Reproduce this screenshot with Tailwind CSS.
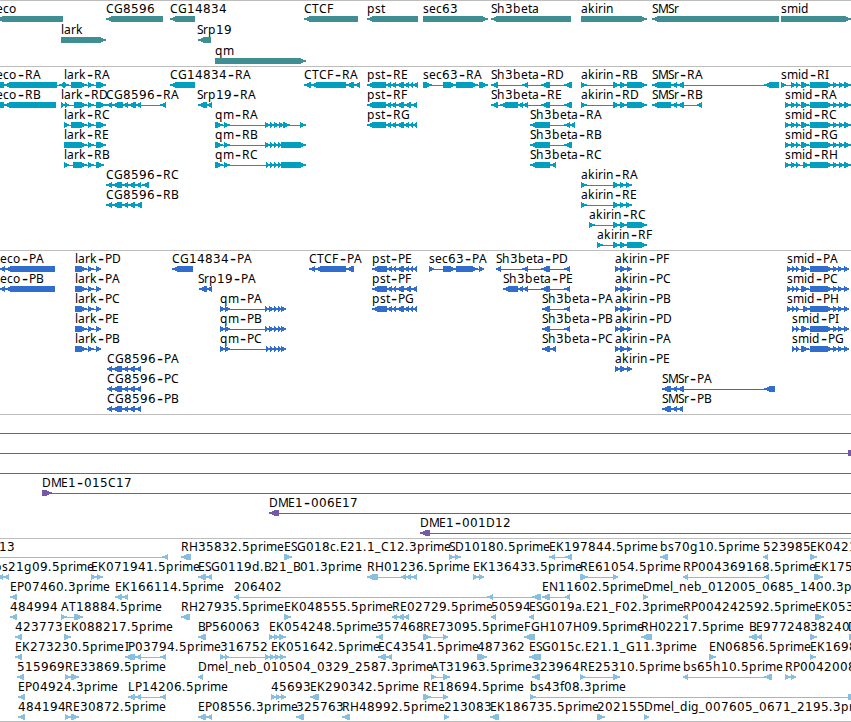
<!DOCTYPE html>
<html lang="en">
<head>
  <meta charset="UTF-8" />
  <meta name="viewport" content="width=device-width, initial-scale=1.0" />
  <title>Genome Tracks</title>
  <script src="https://cdn.jsdelivr.net/npm/@tailwindcss/browser@4"></script>
</head>
<body class="bg-white overflow-hidden">
  <main class="w-[851px] h-[722px] flex flex-col overflow-hidden font-['Noto_Sans',sans-serif] text-[12px]">
    <section id="genes" class="border-t border-[#bdbdbd] pb-[2px] fill-[#3f8e93]"></section>
    <section id="transcripts" class="border-t border-[#bdbdbd] pb-[3px] fill-[#009fc0]"></section>
    <section id="proteins" class="border-t border-[#bdbdbd] pb-[3px] fill-[#306dcc]"></section>
    <section id="clones" class="border-t border-[#bdbdbd] pb-[3px] fill-[#7559a6]"></section>
    <section id="ests" class="border-y border-[#bdbdbd] pb-[2px] fill-[#88bfdf]"></section>
  </main>

  <script>
    // Each feature: "label | label x | strand | start-end blocks"
    const tracks = {
      genes: [
        ['eco|-4|L|-3:63', 'CG8596|106|L|106:163', 'CG14834|170|L|170:195', 'CTCF|304|L|304:358', 'pst|367|L|367:418', 'sec63|423|R|423:488', 'Sh3beta|491|L|491:571', 'akirin|581|R|581:647', 'SMSr|652|L|652:779', 'smid|781|R|781:851'],
        ['lark|61|R|61:106', 'Srp19|197|L|198:211'],
        ['qm|215|R|215:306'],
      ],
      transcripts: [
        ['eco-RA|-4|L|-6:4 4:57 59:65', 'lark-RA|64|R|63:69 71:87 88:94 96:106', 'CG14834-RA|170|L|170:195', 'CTCF-RA|304|L|304:311 311:346 346:354 354:360', 'pst-RE|367|L|367:386 386:391 391:396 396:404 404:409 409:413 413:418', 'sec63-RA|423|R|423:432 443:456 456:478 479:488', 'Sh3beta-RD|491|L|491:498 522:528 541:550 564:572', 'akirin-RB|581|R|581:587 613:620 620:627 627:647', 'SMSr-RA|652|L|652:671 671:677 677:684 764:779', 'smid-RI|781|R|781:786 791:796 796:800 801:809 810:833 833:839 839:844 844:851'],
        ['eco-RB|-4|L|-6:4 4:56', 'lark-RD|61|R|61:65 65:69 74:87 88:94 96:106', 'CG8596-RA|106|L|106:112 112:123 123:128 128:136 136:141 160:166', 'Srp19-RA|197|L|198:207 207:212', 'pst-RF|367|L|367:386 386:391 391:396 396:404 404:411 411:417', 'Sh3beta-RE|491|L|491:498 500:518 518:523 523:528 541:550 564:572', 'akirin-RD|581|R|581:587 613:620 620:627 627:647', 'SMSr-RB|652|L|652:671 671:677 677:684 697:702', 'smid-RA|785|R|785:791 791:796 796:800 801:809 810:833 833:839 839:844 844:851'],
        ['lark-RC|64|R|64:69 71:87 88:94 96:106', 'qm-RA|215|R|215:223 224:230 265:270 270:274 274:279 279:284 283:290 300:306', 'pst-RG|367|L|367:386 386:391 391:396 396:404 404:409 409:413 413:417', 'Sh3beta-RA|530|L|530:550 564:570 570:575', 'smid-RC|785|R|785:791 791:796 796:800 801:809 810:833 833:839 839:844 844:851'],
        ['lark-RE|64|R|64:87 88:94 96:106', 'qm-RB|215|R|215:223 224:230 265:270 270:274 274:278 278:282 281:306', 'Sh3beta-RB|530|L|530:550 564:572', 'smid-RG|785|R|785:791 791:796 796:800 801:809 810:833 833:839 839:844 844:851'],
        ['lark-RB|64|R|64:69 73:87 88:94 96:104', 'qm-RC|215|R|215:223 224:230 266:270 270:274 274:278 278:282 281:306', 'Sh3beta-RC|530|L|530:550 550:556', 'smid-RH|785|R|785:791 791:796 796:800 803:810 810:833 833:839 839:844 844:851'],
        ['CG8596-RC|106|L|106:112 112:122 122:128 128:135 135:141 142:149', 'akirin-RA|581|R|581:587 613:620 620:626 626:632'],
        ['CG8596-RB|106|L|106:112 112:122 122:128 128:135 135:142', 'akirin-RE|581|R|581:587 613:620 620:626 626:632'],
        ['akirin-RC|589|R|589:595 613:620 620:627 627:647'],
        ['akirin-RF|597|R|597:603 613:620 620:627 627:647'],
      ],
      proteins: [
        ['eco-PA|0|L|0:5 5:55', 'lark-PD|75|R|75:87 88:94 96:101', 'CG14834-PA|172|L|172:193', 'CTCF-PA|309|L|309:315 315:346 346:354', 'pst-PE|372|L|372:387 387:392 392:396 396:404 404:409 409:413 413:417', 'sec63-PA|429|R|429:434 443:456 456:478 479:484', 'Sh3beta-PD|496|L|496:501 522:528 541:550 564:570', 'akirin-PF|615|R|615:620 620:627 627:632', 'smid-PA|787|R|787:792 792:796 796:799 801:809 810:833 833:838 838:844 844:849'],
        ['eco-PB|0|L|0:5 5:55', 'lark-PA|75|R|75:87 88:94 96:101', 'Srp19-PA|198|L|199:207 207:212', 'pst-PF|372|L|372:387 387:392 392:396 396:404 404:411 411:417', 'Sh3beta-PE|503|L|503:518 518:523 523:528 541:550 564:570', 'akirin-PC|615|R|615:620 620:627 627:632', 'smid-PC|787|R|787:792 792:796 796:799 801:809 810:833 833:838 838:844 844:849'],
        ['lark-PC|75|R|75:87 88:94 96:101', 'qm-PA|220|R|220:225 225:230 265:269 269:274 274:278 278:282 281:286', 'pst-PG|372|L|372:387 387:392 392:396 396:404 404:409 409:413 413:417', 'Sh3beta-PA|542|L|542:550 564:570', 'akirin-PB|615|R|615:620 620:627 627:632', 'smid-PH|787|R|787:792 792:796 796:799 803:810 810:833 833:838 838:844 844:849'],
        ['lark-PE|75|R|75:87 88:94 96:101', 'qm-PB|220|R|220:225 225:230 265:269 269:274 274:278 278:282 281:286', 'Sh3beta-PB|542|L|542:550 564:570', 'akirin-PD|615|R|615:620 620:627 627:632', 'smid-PI|792|R|792:796 796:799 801:809 810:833 833:838 838:844 844:849'],
        ['lark-PB|75|R|75:87 88:94 96:101', 'qm-PC|220|R|220:225 225:230 266:270 270:274 274:278 278:282 281:286', 'Sh3beta-PC|542|L|542:550 550:556', 'akirin-PA|615|R|615:620 620:627 627:632', 'smid-PG|792|R|792:796 796:799 801:809 810:833 833:838 838:844 844:849'],
        ['CG8596-PA|107|L|107:112 112:122 122:128 128:135 135:141', 'akirin-PE|615|R|615:620 620:627 627:632'],
        ['CG8596-PC|107|L|107:112 112:122 122:128 128:135 135:141', 'SMSr-PA|662|L|662:671 671:677 677:684 764:775'],
        ['CG8596-PB|107|L|107:112 112:122 122:128 128:135 135:141', 'SMSr-PB|662|L|662:671 671:677 677:683'],
      ],
      clones: [
        ['|0|L|-20:-10 900:910'],
        ['|0|R|-20:-10 848:860'],
        ['|0|L|-20:-10 900:910'],
        ['DME1-015C17|42|R|42:52 900:910'],
        ['DME1-006E17|269|L|269:279 900:910'],
        ['DME1-001D12|420|L|420:430 900:910'],
      ],
      ests: [
        ['13|-1|L|-20:-10 162:168', 'RH35832.5prime|181|L|181:191', 'ESG018c.E21.1_C12.3prime|284|R|284:292', 'SD10180.5prime|449|R|449:455 455:461', 'EK197844.5prime|549|L|549:555 565:572', 'bs70g10.5prime|660|L|660:668', '523985|763|L|763:768', 'EK0421|810|R|810:817'],
        ['bs21g09.5prime|-6|L|-3:3 3:9', 'EK071941.5prime|91|R|91:97 97:103', 'ESG0119d.B21_B01.3prime|198|L|198:206 206:212', 'RH01236.5prime|367|L|367:378 401:406 406:411 411:417', 'EK136433.5prime|473|R|473:479 479:484', 'RE61054.5prime|580|R|580:588 613:618', 'RP004369168.5prime|683|L|683:688 764:769', 'EK1750|814|R|814:823'],
        ['EP07460.3prime|10|L|10:17', 'EK166114.5prime|115|L|115:122 122:128', '206402|234|L|234:239 487:493 532:541', 'EN11602.5prime|542|L|542:550 565:570', 'Dmel_neb_012005_0685_1400.3prime|643|R|643:648'],
        ['484994|10|L|10:17', 'AT18884.5prime|61|R|61:67 74:83', 'RH27935.5prime|181|L|181:190', 'EK048555.5prime|284|R|284:291', 'RE02729.5prime|392|L|392:397 397:404 404:409', '50594|491|L|491:496', 'ESG019a.E21_F02.3prime|529|L|529:534', 'RP004242592.5prime|683|L|683:688', 'EK053|815|R|815:824'],
        ['423773|15|L|15:22', 'EK088217.5prime|64|R|64:71', 'BP560063|198|L|198:206', 'EK054248.5prime|269|R|269:274 274:279 279:286', '357468|376|L|376:383', 'RE73095.5prime|423|R|423:431 443:448', 'FGH107H09.5prime|524|L|524:535', 'RH02217.5prime|641|L|641:652', 'BE977248|749|L|749:757 757:762', '38240|810|R|810:817', 'D|848|R|849:856'],
        ['EK273230.5prime|15|L|15:22', 'IP03794.5prime|125|L|125:135 135:141 160:166', '316752|220|R|220:225 225:229 265:270', 'EK051642.5prime|271|R|270:275 275:280 280:286', 'EC43541.5prime|378|L|378:386 386:392', '487362|477|R|477:487', 'ESG015c.E21.1_G11.3prime|529|L|529:541', 'EN06856.5prime|709|R|709:716', 'EK1698|810|R|810:816'],
        ['515969|17|L|17:24', 'RE33869.5prime|65|R|65:71 71:79', 'Dmel_neb_010504_0329_2587.3prime|198|L|198:203', 'AT31963.5prime|431|R|431:436 443:450', '323964|532|L|532:540', 'RE25310.5prime|580|R|580:585 613:620', 'bs65h10.5prime|683|L|683:688 764:772', 'RP0042008|785|R|785:791 791:796'],
        ['EP04924.3prime|18|L|18:25', 'LP14206.5prime|128|L|128:135 135:141 160:166', '45693|271|R|271:276 276:281 281:286', 'EK290342.5prime|310|L|310:319', 'RE18694.5prime|423|R|423:431 443:448', 'bs43f08.3prime|530|R|530:536 848:860'],
        ['484194|18|L|18:25', 'RE30872.5prime|65|R|65:71 71:79', 'EP08556.3prime|198|L|198:206 206:212', '325763|296|L|296:304', 'RH48992.5prime|342|L|342:350', '213083|444|R|444:449', 'EK186735.5prime|490|L|490:499', '202155|597|R|597:605', 'Dmel_dig_007605_0671_2195.3prime|644|R|644:649'],
      ],
    };

    // Whole-pixel advances for the labels
    const advances = { C: 8, G: 9, T: 7, F: 7, S: 6, M: 10, R: 8, A: 8, B: 7, D: 9, E: 7, H: 9, I: 3, K: 8, L: 7, N: 9, P: 7,
      a: 7, b: 8, c: 6, d: 8, e: 7, f: 4, g: 8, h: 8, i: 3, k: 7, l: 3, m: 11, n: 8, o: 8, p: 8, q: 8, r: 5, s: 6, t: 4, '-': 8, '.': 4, _: 6 };

    function drawLabel(label, start) {
      let x = start;
      const xs = [];
      const ys = [];
      for (const ch of label) {
        xs.push(ch === '-' ? x + 1 : x);
        ys.push(ch === '-' ? 12.5 : 12);
        x += advances[ch] || 8;
      }
      // digits and the wide hyphen come from DejaVu
      const chars = label.replace(/[0-9]+|-/g, part => part === '-'
        ? '<tspan class="font-[DejaVu_Sans] text-[17px]">-</tspan>'
        : `<tspan class="font-[DejaVu_Sans]">${part}</tspan>`);
      return `<text class="fill-black" y="${ys.join(' ')}" x="${xs.join(' ')}">${chars}</text>`;
    }

    // Block with a pointed end on the strand side
    function drawBlock(x1, x2, strand) {
      const head = Math.min(6, x2 - x1);
      const points = strand === 'R'
        ? `${x1},15 ${x2 - head},15 ${x2},17.6 ${x2},18.4 ${x2 - head},21 ${x1},21`
        : `${x2},15 ${x1 + head},15 ${x1},17.6 ${x1},18.4 ${x1 + head},21 ${x2},21`;
      return `<polygon points="${points}" />`;
    }

    function drawFeature(feature) {
      const [label, labelX, strand, spans] = feature.split('|');
      const blocks = spans.split(' ').map(s => s.split(':').map(Number));
      const first = blocks[0][0];
      const last = blocks[blocks.length - 1][1];
      let out = '';
      if (blocks.length > 1) {
        out += `<rect x="${first}" y="18" width="${last - first}" height="1" />`;
      }
      out += blocks.map(b => drawBlock(b[0], b[1], strand)).join('');
      if (label) out += drawLabel(label, Number(labelX));
      return out;
    }

    for (const id in tracks) {
      const rowClass = id === 'genes' ? 'block w-full h-[21px] overflow-visible' : 'block w-full h-5 overflow-visible';
      document.getElementById(id).innerHTML = tracks[id].map(row =>
        `<svg class="${rowClass}" shape-rendering="crispEdges">${row.map(drawFeature).join('')}</svg>`
      ).join('');
    }
  </script>
</body>
</html>
